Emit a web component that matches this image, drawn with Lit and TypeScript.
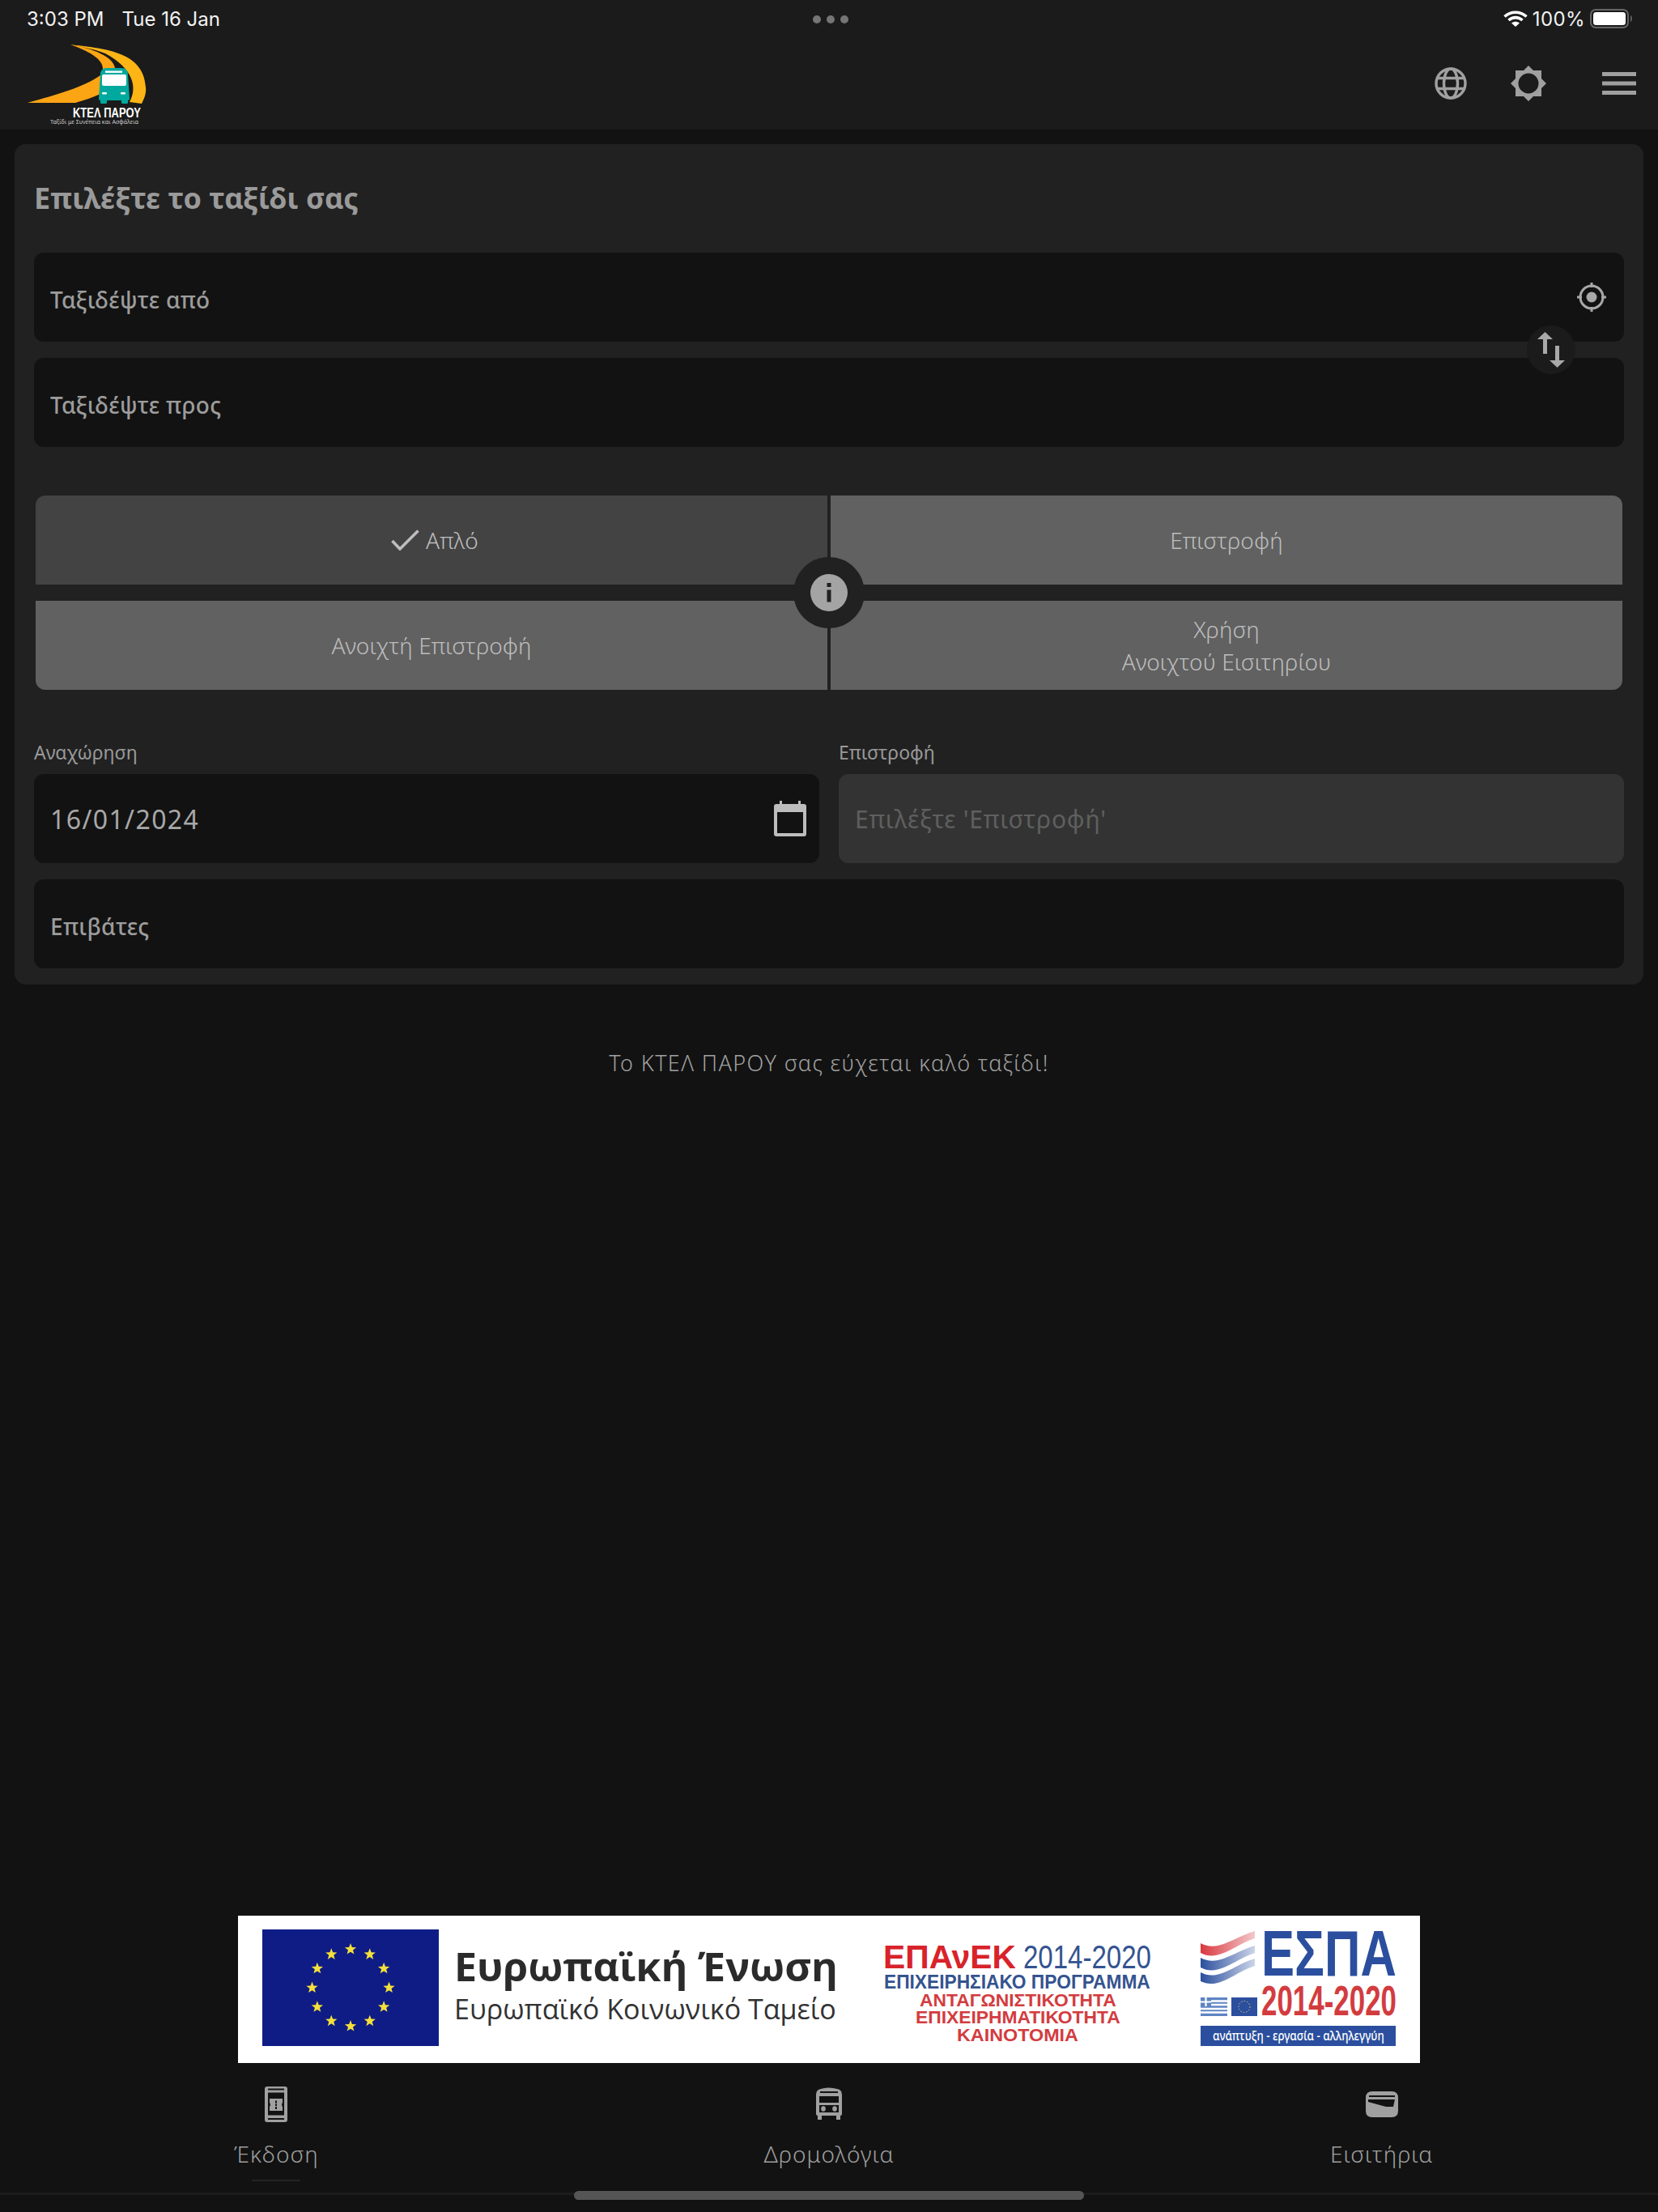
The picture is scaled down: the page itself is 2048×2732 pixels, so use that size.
import { LitElement, html, css, svg } from "lit";
import { customElement } from "lit/decorators.js";

const star = (cx: number, cy: number, r: number) => {
  const pts: string[] = [];
  for (let i = 0; i < 10; i++) {
    const a = -Math.PI / 2 + (i * Math.PI) / 5;
    const rr = i % 2 ? r * 0.42 : r;
    pts.push(`${(cx + rr * Math.cos(a)).toFixed(2)},${(cy + rr * Math.sin(a)).toFixed(2)}`);
  }
  return svg`<polygon points=${pts.join(" ")} fill="#f5e03a"></polygon>`;
};
const ring = (cx: number, cy: number, R: number, r: number) =>
  Array.from({ length: 12 }, (_, i) => {
    const a = (i * Math.PI) / 6;
    return star(cx + R * Math.cos(a), cy + R * Math.sin(a), r);
  });

const measure = document.createElement("canvas").getContext("2d")!;
/** Real text, stretched horizontally so that it spans exactly w pixels. */
const fit = (t: string, x: number, y: number, w: number, size: number, weight: number, family: string, fill: string) => {
  measure.font = `${weight} ${size}px "${family}"`;
  const sx = w / measure.measureText(t).width;
  return svg`<text transform="translate(${x} ${y}) scale(${sx.toFixed(4)} 1)" font-family=${family} font-weight=${weight} font-size=${size} fill=${fill}>${t}</text>`;
};

const LS = "Liberation Sans";
const logo = html`<svg class="logo" viewBox="30 46 160 114" width="160" height="114">
  <path d="M34 127C70 117 105 107 124 93L124 116C115 120 104 124 93 127Z" fill="#fba414"></path>
  <path d="M87 55C125 60 178 62 180 108C181 115 178 122 175 128L160 126C170 108 165 85 130 66C118 61 100 58 87 55Z" fill="#fdb515"></path>
  <path d="M87 55C115 60 140 70 142 84L127 86C128 75 115 65 87 55Z" fill="#fba414"></path>
  <path d="M124 92Q124 84 132 84H150Q158 84 158 92L160 122Q160 124 157 124H125Q122 124 122 122Z" fill="#00a99d"></path>
  <rect x="124" y="122" width="8" height="6" rx="1.5" fill="#00a99d"></rect>
  <rect x="150" y="122" width="8" height="6" rx="1.5" fill="#00a99d"></rect>
  <rect x="126" y="92" width="30" height="14" rx="2" fill="#fff"></rect>
  <rect x="130" y="87.5" width="21" height="2.4" fill="#fff"></rect>
  <rect x="126" y="114" width="6" height="2.4" rx="1" fill="#fff"></rect>
  <rect x="149" y="114" width="6" height="2.4" rx="1" fill="#fff"></rect>
  ${fit("ΚΤΕΛ ΠΑΡΟΥ", 90, 145, 84, 16, 700, LS, "#fff")}
  ${fit("Ταξίδι με Συνέπεια και Ασφάλεια", 62, 153, 109, 7.4, 400, "Noto Sans", "#c9c9c9")}
</svg>`;

const banner = html`<svg class="banner" viewBox="0 0 1460 182" width="1460" height="182">
  <defs>
    <linearGradient id="wr" x1="0" x2="1"><stop offset="0" stop-color="#d9383f"></stop><stop offset="1" stop-color="#f3c9cb"></stop></linearGradient>
    <linearGradient id="wb" x1="0" x2="1"><stop offset="0" stop-color="#2b4f9e"></stop><stop offset="1" stop-color="#ccd5e8"></stop></linearGradient>
  </defs>
  <rect width="1460" height="182" fill="#fff"></rect>
  <g transform="translate(-294 -2366)">
  <rect x="324" y="2383" width="218" height="144" fill="#0f1c86"></rect>
  ${ring(433, 2455, 47.5, 7.5)}
  ${fit("Ευρωπαϊκή Ένωση", 561, 2447, 474, 48, 700, "Open Sans", "#2b2b2b")}
  ${fit("Ευρωπαϊκό Κοινωνικό Ταμείο", 561, 2494, 472, 35, 400, "Open Sans", "#333")}
  ${fit("ΕΠΑνΕΚ", 1091, 2431, 164, 41, 700, LS, "#d8232a")}
  ${fit("2014-2020", 1264, 2431, 158, 41, 400, LS, "#34538f")}
  ${fit("ΕΠΙΧΕΙΡΗΣΙΑΚΟ ΠΡΟΓΡΑΜΜΑ", 1092, 2456, 329, 24, 700, LS, "#34538f")}
  ${fit("ΑΝΤΑΓΩΝΙΣΤΙΚΟΤΗΤΑ", 1136, 2478, 243, 22, 700, LS, "#d33c3f")}
  ${fit("ΕΠΙΧΕΙΡΗΜΑΤΙΚΟΤΗΤΑ", 1131, 2499, 253, 22, 700, LS, "#d33c3f")}
  ${fit("ΚΑΙΝΟΤΟΜΙΑ", 1182, 2521, 150, 22, 700, LS, "#d33c3f")}
  <path d="M1483 2400C1505 2412 1525 2392 1550 2385V2394C1525 2402 1505 2424 1483 2412Z" fill="url(#wr)"></path>
  <path d="M1483 2418C1505 2430 1525 2410 1550 2403V2412C1525 2420 1505 2442 1483 2430Z" fill="url(#wb)"></path>
  <path d="M1483 2436C1505 2448 1525 2426 1550 2419V2428C1525 2436 1505 2458 1483 2447Z" fill="url(#wb)"></path>
  ${fit("ΕΣΠΑ", 1558, 2440, 167, 79, 700, LS, "#2b4f9e")}
  ${fit("2014-2020", 1558, 2489, 167, 52, 700, LS, "#d33c3f")}
  <rect x="1483" y="2467" width="33" height="23" fill="#5f84c4"></rect>
  <path d="M1483 2471.5H1516M1483 2476H1516M1483 2481H1516M1483 2485.5H1516" stroke="#fff" stroke-width="2.4"></path>
  <rect x="1483" y="2467" width="13" height="11" fill="#5f84c4"></rect>
  <path d="M1489.5 2467V2478M1483 2472.5H1496" stroke="#fff" stroke-width="2.2"></path>
  <rect x="1521" y="2467" width="32" height="23" fill="#2b4f9e"></rect>
  <circle cx="1537" cy="2478.5" r="7" fill="none" stroke="#e8d96a" stroke-width="1" stroke-dasharray="1.4 2.2"></circle>
  <rect x="1483" y="2502" width="241" height="25" fill="#2b4f9e"></rect>
  ${fit("ανάπτυξη - εργασία - αλληλεγγύη", 1498, 2520, 212, 17, 500, "Noto Sans", "#fff")}
  </g>
</svg>`;

@customElement("app-root")
export class AppRoot extends LitElement {
  static styles = css`
    :host {
      display: flex;
      flex-direction: column;
      height: 2732px;
      background: #121212;
      font-family: "Noto Sans", sans-serif;
      color: #9c9c9c;
      overflow: hidden;
    }
    svg { display: block; flex: none; }
    .top { background: #1b1b1b; height: 160px; flex: none; display: flex; flex-direction: column; }
    .status {
      height: 46px; flex: none; padding: 0 30px 0 33px;
      display: grid; grid-template-columns: 1fr auto 1fr; align-items: center;
      font-family: Inter, sans-serif; font-size: 24px; color: #f2f2f2;
    }
    .s-left { display: flex; gap: 22px; }
    .dots { display: flex; gap: 7px; padding-top: 1px; }
    .dots i { width: 10px; height: 10px; border-radius: 50%; background: #757575; display: block; }
    .s-right { display: flex; justify-content: flex-end; align-items: center; gap: 6px; }
    .pct { letter-spacing: 0.4px; }
    .head { flex: 1; display: flex; align-items: center; padding-right: 27px; }
    .logo-wrap { flex: 1; padding-left: 30px; }
    .head-icons { display: flex; align-items: center; }
    .globe { margin-right: 54px; }
    .sun { margin-right: 69px; }
    .card {
      margin: 18px 18px 0; padding: 0 24px 20px; background: #212121; border-radius: 14px;
      display: flex; flex-direction: column; flex: none;
    }
    .title {
      height: 134px; flex: none; margin: 0; font-size: 36px; font-weight: 700; line-height: 46px;
      padding-top: 44px; box-sizing: border-box; color: #9a9a9a; letter-spacing: 0;
    }
    .stops { position: relative; display: flex; flex-direction: column; gap: 20px; }
    .field {
      height: 110px; background: #121212; border-radius: 12px; box-sizing: border-box;
      padding: 6px 20px 0; display: flex; align-items: center; justify-content: space-between;
      font-size: 28px; font-weight: 500; color: #9c9c9c; letter-spacing: 0.33px;
    }
    .target { margin-top: -6px; margin-right: 2px; }
    .swap {
      position: absolute; left: 1844px; top: 90px; width: 60px; height: 60px; border-radius: 50%;
      background: #1b1b1b; display: flex; align-items: center; justify-content: center;
    }
    .types {
      position: relative; margin: 60px 2px 0; display: grid; grid-template-columns: 1fr 1fr; column-gap: 4px; row-gap: 20px;
    }
    .type {
      height: 110px; background: #616161; color: #bdbdbd; font-size: 28px; font-weight: 300; letter-spacing: 0.1px;
      display: flex; align-items: center; justify-content: center; text-align: center; gap: 8px; line-height: 40px;
    }
    .type.on { background: #434343; border-top-left-radius: 12px; padding-left: 8px; }
    .tr { border-top-right-radius: 12px; }
    .bl { border-bottom-left-radius: 12px; }
    .br { border-bottom-right-radius: 12px; }
    .info {
      position: absolute; left: 50%; top: 50%; width: 88px; height: 88px; margin: -44px 0 0 -44px; border-radius: 50%;
      background: #212121; display: flex; align-items: center; justify-content: center;
    }
    .dates { display: grid; grid-template-columns: 970px 970px; column-gap: 24px; margin-top: 60px; }
    .date-col { display: flex; flex-direction: column; }
    .lbl { height: 44px; font-size: 23px; line-height: 34px; color: #999; letter-spacing: 0; }
    .date { font-size: 32px; font-weight: 400; padding: 0 16px 0 20px; color: #a8a8a8; letter-spacing: 1.4px; }
    .date.off { background: #333; color: #5f5f5f; font-size: 30px; font-weight: 400; letter-spacing: 0.8px; }
    .pax { margin-top: 20px; }
    .wish { text-align: center; margin-top: 78px; font-size: 27px; font-weight: 300; line-height: 38px; letter-spacing: 1.4px; color: #a0a0a0; }
    .spacer { flex: 1; }
    .banner { margin: 0 auto; }
    .foot { position: relative; flex: none; height: 184px; display: flex; flex-direction: column; }
    .tabs { display: grid; grid-template-columns: repeat(3, 1fr); padding-top: 27px; flex: 1; }
    .tab { display: flex; flex-direction: column; align-items: center; font-size: 28px; font-weight: 300; letter-spacing: 1px; color: #9f9f9f; }
    .tab-label { line-height: 40px; margin-top: 17px; }
    .mark { width: 60px; height: 2px; margin-top: 12px; background: #232323; }
    .line { height: 3px; background: #1c1c1c; margin-bottom: 21px; flex: none; }
    .home {
      position: absolute; left: 709px; bottom: 15px; width: 630px; height: 11px; border-radius: 6px; background: #555;
    }
  `;

  render() {
    const g = "#a0a0a0";
    return html`
      <div class="top">
        <div class="status">
          <div class="s-left"><span>3:03 PM</span><span>Tue 16 Jan</span></div>
          <div class="dots"><i></i><i></i><i></i></div>
          <div class="s-right">
            <svg width="30" height="22" viewBox="0 0 30 22">
              <path d="M1.5 8.5C9 1.5 21 1.5 28.5 8.5" fill="none" stroke="#fff" stroke-width="3.6"></path>
              <path d="M6.5 13C11.5 8.5 18.5 8.5 23.5 13" fill="none" stroke="#fff" stroke-width="3.6"></path>
              <path d="M15 21L10 16.5C13 14.2 17 14.2 20 16.5Z" fill="#fff"></path>
            </svg>
            <span class="pct">100%</span>
            <svg width="54" height="24" viewBox="0 0 54 24">
              <rect x="1" y="1" width="46" height="22" rx="6" fill="none" stroke="#666" stroke-width="2"></rect>
              <rect x="4" y="4" width="40" height="16" rx="3.5" fill="#fff"></rect>
              <path d="M50 8C52.5 9 52.5 15 50 16Z" fill="#666"></path>
            </svg>
          </div>
        </div>
        <div class="head">
          <div class="logo-wrap">${logo}</div>
          <div class="head-icons">
            <svg class="globe" width="40" height="40" viewBox="0 0 40 40" fill="none" stroke=${g} stroke-width="3.4">
              <circle cx="20" cy="20" r="18"></circle>
              <ellipse cx="20" cy="20" rx="8.5" ry="18"></ellipse>
              <path d="M3 13.5H37M3 26.5H37"></path>
            </svg>
            <svg class="sun" width="44" height="44" viewBox="0 0 44 44">
              <path fill-rule="evenodd" fill=${g} d="M6 6H16L22 0L28 6H38V16L44 22L38 28V38H28L22 44L16 38H6V28L0 22L6 16ZM22 9.5A12.5 12.5 0 1 0 22 34.5A12.5 12.5 0 1 0 22 9.5Z"></path>
            </svg>
            <svg width="42" height="28" viewBox="0 0 42 28" fill=${g}>
              <rect width="42" height="5"></rect><rect y="11.5" width="42" height="5"></rect><rect y="23" width="42" height="5"></rect>
            </svg>
          </div>
        </div>
      </div>

      <div class="card">
        <h1 class="title">Επιλέξτε το ταξίδι σας</h1>
        <div class="stops">
          <div class="field">
            <span>Ταξιδέψτε από</span>
            <svg class="target" width="36" height="36" viewBox="0 0 36 36" fill="none" stroke="#a8a8a8" stroke-width="3">
              <circle cx="18" cy="18" r="14"></circle>
              <path d="M18 0V6M18 30V36M0 18H6M30 18H36"></path>
              <circle cx="18" cy="18" r="6.5" fill="#a8a8a8" stroke="none"></circle>
            </svg>
          </div>
          <div class="field"><span>Ταξιδέψτε προς</span></div>
          <div class="swap">
            <svg width="34" height="44" viewBox="0 0 34 44" fill="#a8a8a8">
              <path d="M9.5 0L19 9H12V27H7V9H0Z"></path>
              <path d="M24.5 44L15 35H22V17H27V35H34Z"></path>
            </svg>
          </div>
        </div>
        <div class="types">
          <div class="type on">
            <svg width="35" height="26" viewBox="0 0 35 26" fill="none" stroke="#bdbdbd" stroke-width="3.6"><path d="M1.5 14L11 24L33.5 1.5"></path></svg>
            <span>Απλό</span>
          </div>
          <div class="type tr">Επιστροφή</div>
          <div class="type bl">Ανοιχτή Επιστροφή</div>
          <div class="type br">Χρήση<br />Ανοιχτού Εισιτηρίου</div>
          <div class="info">
            <svg width="46" height="46" viewBox="0 0 46 46">
              <circle cx="23" cy="23" r="23" fill="#a4a4a4"></circle>
              <rect x="20.5" y="11" width="5" height="5" fill="#212121"></rect>
              <rect x="20.5" y="19.5" width="5" height="15" fill="#212121"></rect>
            </svg>
          </div>
        </div>
        <div class="dates">
          <div class="date-col">
            <div class="lbl">Αναχώρηση</div>
            <div class="field date">
              <span>16/01/2024</span>
              <svg width="40" height="44" viewBox="0 0 40 44">
                <path fill="#bdbdbd" fill-rule="evenodd" d="M7 0H10V4H30V0H33V4H37Q40 4 40 7V41Q40 44 37 44H3Q0 44 0 41V7Q0 4 3 4H7ZM4 14V40H36V14Z"></path>
              </svg>
            </div>
          </div>
          <div class="date-col">
            <div class="lbl">Επιστροφή</div>
            <div class="field date off"><span>Επιλέξτε 'Επιστροφή'</span></div>
          </div>
        </div>
        <div class="field pax"><span>Επιβάτες</span></div>
      </div>

      <div class="wish">Το ΚΤΕΛ ΠΑΡΟΥ σας εύχεται καλό ταξίδι!</div>
      <div class="spacer"></div>
      ${banner}
      <div class="foot">
        <div class="tabs">
          <div class="tab">
            <svg width="48" height="48" viewBox="0 0 48 48">
              <path fill=${g} fill-rule="evenodd" d="M13 2H35Q38 2 38 5V43Q38 46 35 46H13Q10 46 10 43V5Q10 2 13 2ZM14 4.5V6.5H34V4.5ZM14 9.5V37.5H34V9.5ZM14 41V43H34V41Z"></path>
              <path fill=${g} fill-rule="evenodd" d="M16 17H32V22Q30 24.5 32 27V32H16V27Q18 24.5 16 22ZM23 19.5V22.5H25V19.5ZM23 23.5V26H25V23.5ZM23 27V30H25V27Z"></path>
            </svg>
            <span class="tab-label">Έκδοση</span>
            <span class="mark"></span>
          </div>
          <div class="tab">
            <svg width="48" height="48" viewBox="0 0 48 48">
              <path fill=${g} fill-rule="evenodd" d="M14 5Q24 2 34 5Q40 6 40 12V36Q40 38 38 38V43H33V38H15V43H10V38Q8 38 8 36V12Q8 6 14 5ZM13 8V10H35V8ZM12 14V22H36V14ZM12 25V34H36V25Z"></path>
              <ellipse cx="17" cy="29.5" rx="2.8" ry="3.2" fill=${g}></ellipse>
              <ellipse cx="31" cy="29.5" rx="2.8" ry="3.2" fill=${g}></ellipse>
            </svg>
            <span class="tab-label">Δρομολόγια</span>
          </div>
          <div class="tab">
            <svg width="48" height="48" viewBox="0 0 48 48">
              <path fill=${g} fill-rule="evenodd" d="M12 8H36Q44 8 44 16V32Q44 40 36 40H12Q4 40 4 32V16Q4 8 12 8ZM8 13V15H40V13ZM7 18V21L29 27L38 27L40 18Z"></path>
            </svg>
            <span class="tab-label">Εισιτήρια</span>
          </div>
        </div>
        <div class="line"></div>
        <div class="home"></div>
      </div>
    `;
  }
}
